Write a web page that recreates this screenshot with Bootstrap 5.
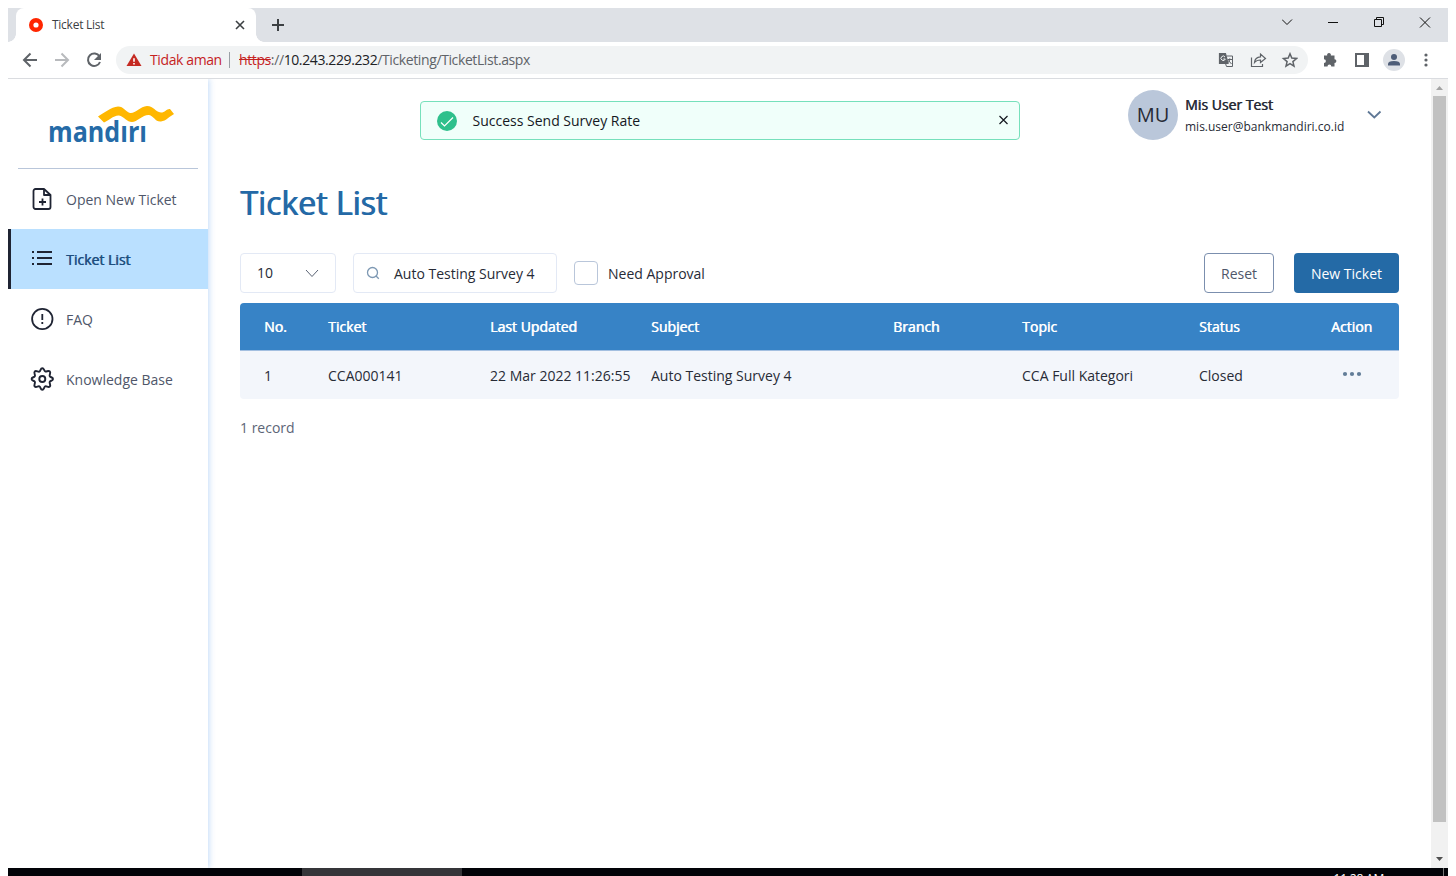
<!DOCTYPE html>
<html lang="id">
<head>
<meta charset="utf-8">
<title>Ticket List</title>
<link href="https://cdn.jsdelivr.net/npm/bootstrap@5.3.0/dist/css/bootstrap.min.css" rel="stylesheet">
<style>
  body { margin: 0; background: #fff; font-family: "Open Sans", "Noto Sans", sans-serif; font-size: 14px; line-height: 20px; color: #272b36; overflow: hidden; }
  svg { display: block; flex: none; }
  .desktop { width: 1456px; height: 876px; padding: 8px 8px 0; }
  .tabstrip { height: 34px; background: #dee1e6; padding-left: 8px; }
  .tab-item { position: relative; width: 240px; height: 34px; background: #fff; border-radius: 8px 8px 0 0; padding: 0 11px 0 13px; font-size: 12px; letter-spacing: -.26px; color: #3c4043; }
  .tab-item::before, .tab-item::after { content: ""; position: absolute; bottom: 0; width: 8px; height: 8px; }
  .tab-item::before { left: -8px; background: radial-gradient(circle at 0 0, transparent 7.5px, #fff 8px); }
  .tab-item::after { right: -8px; background: radial-gradient(circle at 100% 0, transparent 7.5px, #fff 8px); }
  .toolbar { height: 37px; border-bottom: 1px solid #dadce0; padding: 0 12px 0 14px; }
  .omnibox { width: 1192px; height: 28px; border-radius: 14px; background: #f1f3f4; padding: 0 10px; color: #5f6368; letter-spacing: -.39px; }
  .unsafe { color: #c5221f; width: 71px; margin-left: 8px; }
  .divline { width: 1px; height: 16px; background: #9aa0a6; margin: 0 9px 0 8px; }
  .profile { width: 22px; height: 22px; border-radius: 50%; background: #dee1e6; }
  .viewport { height: 789px; }
  .sidebar { width: 200px; box-shadow: 1px 0 6px rgba(50,130,230,.3); clip-path: inset(0 -10px 0 0); }
  .brand { height: 90px; margin: 0 10px; border-bottom: 1px solid #b9c6da; padding: 26px 0 0 31px; }
  .brand svg { overflow: visible; }
  .side-link { height: 60px; padding: 0 0 0 19px; color: #4f576a; border-left: 3px solid transparent; gap: 12px; text-decoration: none; }
  .side-link.current { background: #bae0ff; border-color: #1f2433; color: #1d4f80; }
  .side-link svg { color: #1f2433; }
  .side-link span { padding-top: 2px; }
  .semi { text-shadow: .6px 0 0 currentColor; }
  .page { padding: 11px 32px 0; }
  .topline { height: 50px; }
  .toast-ok { width: 600px; height: 39px; margin: 11px 0 0 180px; border: 1px solid #76e0bb; border-radius: 4px; background: #f0fffa; color: #14181f; padding: 0 9px 0 16px; }
  .user { width: 271px; color: #272b36; }
  .avatar { width: 50px; height: 50px; border-radius: 50%; background: #bac7da; font-size: 20px; }
  .user-name { line-height: 20px; margin-top: 5px; }
  .user-mail { font-size: 12px; line-height: 20px; margin-top: 2px; white-space: nowrap; }
  .heading { font-size: 32px; line-height: 46px; color: #2469a6; margin: 40px 0 0; text-shadow: .9px 0 0 #2469a6; }
  .filters { margin-top: 27px; height: 40px; }
  .field { height: 40px; border: 1px solid #e3e9f5; border-radius: 4px; }
  .chk { width: 24px; height: 24px; border: 1px solid #b9c6da; border-radius: 4px; margin: 0 10px 0 17px; }
  .btn-reset, .btn-new { height: 40px; font-size: 14px; line-height: 20px; border-radius: 4px; padding: 2px 0 0; }
  .btn-reset { width: 70px; border: 1px solid #7b8fae; color: #4f576a; background: #fff; }
  .btn-new { width: 105px; background: #246aa6; color: #fff; margin-left: 20px; border: 0; }
  .grid-table { table-layout: fixed; width: 1159px; margin: 10px 0 0; border-collapse: separate; border-spacing: 0; }
  .grid-table th { background: #3783c6; color: #fff; font-weight: 400; height: 48px; padding: 0 0 0 24px; border-bottom: 1px solid #a3bfe0; }
  .grid-table td { background: #f3f6fb; height: 48px; padding: 2px 0 0 24px; white-space: nowrap; }
  .grid-table tr > :last-child { padding-left: 0; text-align: center; }
  .grid-table th:first-child { border-top-left-radius: 4px; }
  .grid-table th:last-child { border-top-right-radius: 4px; }
  .grid-table td:first-child { border-bottom-left-radius: 4px; }
  .grid-table td:last-child { border-bottom-right-radius: 4px; padding: 0 0 2px; }
  .records { color: #5c6577; margin-top: 19px; }
  .scrollbar-v { width: 17px; background: #f1f1f1; padding: 7px 2px 7px; }
  .thumb { width: 13px; height: 726px; background: #c1c1c1; margin-top: 6px; }
  .taskbar { height: 8px; background: #020308; overflow: hidden; }
  .task-active { width: 160px; height: 8px; margin-left: 294px; background: #353539; }
  .clock { color: #fff; font-size: 12px; line-height: 16px; letter-spacing: -.2px; margin: 3px 59px 0 auto; white-space: nowrap; }
  .peek { width: 1px; height: 8px; background: #777; margin-right: 4px; }
</style>
</head>
<body>
<div class="desktop">
  <div class="tabstrip d-flex">
    <div class="tab-item d-flex align-items-center">
      <svg width="14" height="14" viewBox="0 0 14 14"><circle cx="7" cy="7" r="4.8" fill="none" stroke="#ff2600" stroke-width="4.4"/></svg>
      <span style="margin-left:9px">Ticket List</span>
      <svg class="ms-auto" width="10" height="10" viewBox="0 0 10 10" stroke="#3c4043" stroke-width="1.6"><path d="M1 1l8 8M9 1L1 9"/></svg>
    </div>
    <svg style="margin:10px 0 0 15px" width="14" height="14" viewBox="0 0 14 14" stroke="#3c4043" stroke-width="2"><path d="M7 1v12M1 7h12"/></svg>
    <div class="ms-auto d-flex">
      <svg width="166" height="28" viewBox="0 0 166 28" fill="none" stroke="#111" stroke-width="1"><path d="M0 11.500l5 5 5-5M46 14.500h10M92.500 11.500h7v7h-7zM94.500 11.500v-2h7v7h-2M138 9.500l10 10M148 9.500l-10 10"/></svg>
    </div>
  </div>
  <div class="toolbar d-flex align-items-center">
    <svg width="94" height="18" viewBox="0 0 94 18" fill="none" stroke-width="2" stroke="#5f6368"><path d="M15 9H2M8.500 2.500L2 9l6.500 6.500"/><path stroke="#b8babd" d="M33 9h13M39.500 2.500L46 9l-6.500 6.500"/><path d="M77.500 5.500A6.200 6.200 0 1 0 78 11"/><path fill="#5f6368" stroke="none" d="M79 2v7h-7z"/></svg>
    <div class="omnibox d-flex align-items-center">
      <svg width="16" height="14" viewBox="0 0 16 14"><path fill="#c52a22" d="M8 .5L15.500 13H.5z"/><path stroke="#fff" stroke-width="1.600" d="M8 5.300v3.500M8 10v1.600"/></svg>
      <span class="unsafe">Tidak&nbsp;aman</span><span class="divline"></span>
      <span class="text-nowrap"><s style="color:#c5221f">https</s>://<span style="color:#202124">10.243.229.232</span>/Ticketing/TicketList.aspx</span>
      <svg class="ms-auto" width="80" height="16" viewBox="0 0 80 16" fill="none" stroke="#5f6368" stroke-width="1.200"><path fill="#5f6368" d="M1.500 1.500H7.500l2.500 10H1.500z"/><path stroke-width="1" d="M8.500 4H14.500v10.500H8.500l-1-3M9.500 7.500h4.500M11.800 6.300v1q-.3 2-2.300 3.700M10.500 8.500l3 3.500"/><path stroke="#f1f3f4" stroke-width="1" d="M7 5A2.200 2.200 0 1 0 7.300 7H5.300"/><path d="M33.500 5.500V14.500H44.500V12M36.500 10.500Q37 5 42.500 4.800V2L47.500 6.500 42.500 10.500V8Q38.500 8 36.500 10.500z"/><path stroke-width="1.500" d="M72 1.800l1.800 4.300 4.700.4-3.600 3.100 1.100 4.600-4-2.500-4 2.500 1.100-4.600-3.600-3.100 4.700-.4z"/></svg>
    </div>
    <svg style="margin-left:14px" width="16" height="16" viewBox="0 0 16 16" fill="#5f6368"><path d="M2 3.500h3.200a1.900 1.900 0 1 1 3.600 0H12.500v3.700a1.900 1.900 0 1 1 0 3.800v3.500H9.300a1.900 1.900 0 1 0-3.800 0H2v-3.500a1.900 1.900 0 1 0 0-3.800z"/></svg>
    <svg style="margin-left:16px" width="16" height="16" viewBox="0 0 16 16"><path fill="none" stroke="#5f6368" stroke-width="2" d="M2 2h12v12H2z"/><path fill="#5f6368" d="M10 2h5v12h-5z"/></svg>
    <div class="profile d-flex align-items-center justify-content-center" style="margin-left:13px"><svg width="14" height="14" viewBox="0 0 14 14" fill="#4e5d78"><circle cx="7" cy="4" r="3"/><path d="M1 12.500V11q0-3 6-3t6 3v1.500z"/></svg></div>
    <svg class="ms-auto" style="margin-right:8px" width="4" height="14" viewBox="0 0 4 14" fill="#5f6368"><circle cx="2" cy="2" r="1.600"/><circle cx="2" cy="7" r="1.600"/><circle cx="2" cy="12" r="1.600"/></svg>
  </div>

  <div class="viewport d-flex">
    <nav class="sidebar">
      <div class="brand">
        <svg width="126" height="40" viewBox="0 0 126 40"><path fill="#ffb700" d="M49 11.500C55 8 62 2 69 1.500c6 0 7 5 12 6.500C86 9 91 1.500 98 1c7 0 8 6 14 6.500 4 0 6-4 9-3.500l4 5C121 11 117 16 112 16.500c-6 .5-7-5.500-12-6.500-6-.5-12 7-17 7s-8-5.500-13-6.500c-5-.5-11 5.500-15 7z"/><text x="-1" y="37" textLength="99" lengthAdjust="spacingAndGlyphs" font-family="Open Sans" font-weight="700" font-size="29" fill="#256ba7">mandırı</text></svg>
      </div>
      <a class="side-link d-flex align-items-center"><svg width="24" height="24" viewBox="0 0 24 24" fill="none" stroke="currentColor" stroke-width="1.800" stroke-linejoin="round"><path d="M5.500 2H14l6.500 6v12a2 2 0 0 1-2 2h-13a2 2 0 0 1-2-2V4a2 2 0 0 1 2-2z"/><path d="M14 2v6h6.500"/><path d="M12.500 11.500v7M9 15h7"/></svg><span>Open New Ticket</span></a>
      <a class="side-link current d-flex align-items-center"><svg width="24" height="24" viewBox="0 0 24 24" fill="none" stroke="currentColor" stroke-width="2"><path d="M7 5h15M7 11h15M7 17h15M2 5h2M2 11h2M2 17h2"/></svg><span class="semi">Ticket List</span></a>
      <a class="side-link d-flex align-items-center"><svg width="24" height="24" viewBox="0 0 24 24" fill="none" stroke="currentColor" stroke-width="1.800"><circle cx="12.300" cy="12" r="10.200"/><path d="M12.300 7v6M12.300 15v2"/></svg><span>FAQ</span></a>
      <a class="side-link d-flex align-items-center"><svg width="24" height="24" viewBox="0 0 24 24" fill="none" stroke="currentColor" stroke-width="1.900" stroke-linejoin="round"><circle cx="12.300" cy="12" r="3"/><path d="M12.300 1.200c1.900 0 1.600 2.600 2.900 3.200s3.200-1.300 4.600.1-.7 3.200-.1 4.600 3.300 1 3.300 2.900-2.700 1.500-3.300 2.900 1.500 3.200.1 4.600-3.200-.7-4.600-.1-1 3.400-2.900 3.400-1.500-2.800-2.900-3.400-3.200 1.500-4.600.1.700-3.200.1-4.600-3.300-1-3.300-2.900 2.700-1.500 3.300-2.900-1.500-3.200-.1-4.600 3.200.7 4.600.1 1-3.400 2.900-3.400z"/></svg><span>Knowledge Base</span></a>
    </nav>

    <main class="page flex-grow-1">
      <div class="topline d-flex justify-content-between">
        <div class="toast-ok d-flex align-items-center">
          <svg width="20" height="20" viewBox="0 0 20 20"><circle cx="10" cy="10" r="10" fill="#2fc08c"/><path d="M4 11.500l3.500 3.500L16 6.500" fill="none" stroke="#fff" stroke-width="1.200"/></svg>
          <span style="margin-left:15.500px">Success Send Survey Rate</span>
          <svg class="ms-auto" style="margin-bottom:2px" width="12" height="12" viewBox="0 0 12 12" stroke="#14181f" stroke-width="1.200"><path d="M1.500 2l8 8M9.500 2l-8 8"/></svg>
        </div>
        <div class="user d-flex">
          <div class="avatar d-flex align-items-center justify-content-center flex-shrink-0">MU</div>
          <div style="margin-left:7px"><div class="user-name semi">Mis User Test</div><div class="user-mail">mis.user@bankmandiri.co.id</div></div>
          <svg class="ms-auto" style="margin:20px 17px 0 0" width="16" height="10" viewBox="0 0 16 10" fill="none" stroke="#5f7896" stroke-width="1.800"><path d="M2 1.500l6.300 6 6.200-6"/></svg>
        </div>
      </div>

      <h1 class="heading fw-normal">Ticket List</h1>

      <div class="filters d-flex align-items-center">
        <div class="field d-flex align-items-center" style="width:96px;padding:0 16px"><span>10</span><svg class="ms-auto" width="14" height="9" viewBox="0 0 14 9" fill="none" stroke="#596273"><path d="M1 1l6 6.500L13 1"/></svg></div>
        <div class="field d-flex align-items-center" style="width:204px;margin-left:17px;padding-left:12px"><svg width="14" height="14" viewBox="0 0 14 14" fill="none" stroke="#7d98b3" stroke-width="1.300"><circle cx="6.500" cy="6.500" r="5"/><path d="M10 10l2.800 2.800"/></svg><span style="margin-left:14px;padding-top:2px" class="text-nowrap">Auto Testing Survey 4</span></div>
        <span class="chk"></span><span style="padding-top:2px">Need Approval</span>
        <button class="btn btn-reset ms-auto">Reset</button><button class="btn btn-new">New Ticket</button>
      </div>

      <table class="grid-table">
        <colgroup><col style="width:64px"><col style="width:162px"><col style="width:161px"><col style="width:242px"><col style="width:129px"><col style="width:177px"><col style="width:129px"><col style="width:95px"></colgroup>
        <thead><tr class="semi"><th>No.</th><th>Ticket</th><th>Last Updated</th><th>Subject</th><th>Branch</th><th>Topic</th><th>Status</th><th>Action</th></tr></thead>
        <tbody><tr><td>1</td><td>CCA000141</td><td>22 Mar 2022 11:26:55</td><td>Auto Testing Survey 4</td><td></td><td>CCA Full Kategori</td><td>Closed</td><td><svg class="mx-auto" width="20" height="6" viewBox="0 0 20 6" fill="#627d98"><circle cx="3" cy="3" r="2.100"/><circle cx="10" cy="3" r="2.100"/><circle cx="17" cy="3" r="2.100"/></svg></td></tr></tbody>
      </table>
      <div class="records">1 record</div>
    </main>

    <div class="scrollbar-v d-flex flex-column">
      <svg class="mx-auto" width="7" height="4" viewBox="0 0 7 4" fill="#a3a3a3"><path d="M0 4L3.500 0 7 4z"/></svg>
      <div class="thumb"></div>
      <svg class="mx-auto mt-auto" width="7" height="4" viewBox="0 0 7 4" fill="#505050"><path d="M0 0l3.500 4L7 0z"/></svg>
    </div>
  </div>
  <div class="taskbar d-flex"><div class="task-active"></div><div class="clock">11:28 AM</div><div class="peek"></div></div>
</div>
<script src="https://cdn.jsdelivr.net/npm/bootstrap@5.3.0/dist/js/bootstrap.bundle.min.js"></script>
</body>
</html>
